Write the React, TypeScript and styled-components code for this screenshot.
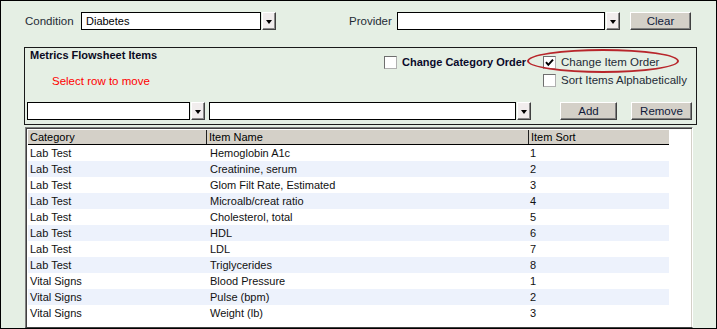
import React from "react";
import styled, { createGlobalStyle } from "styled-components";

const Global = createGlobalStyle`
  html, body { margin: 0; padding: 0; background: #ffffff; }
  body { font-family: "Liberation Sans", Arial, sans-serif; }
  * { box-sizing: border-box; }
`;

const Window = styled.div`
  width: 717px;
  height: 329px;
  border: 1px solid #000;
  background: #e5efe4;
  padding: 11px 19px 0 23px;
  display: flex;
  flex-direction: column;
  overflow: hidden;
  font-family: "Liberation Sans", Arial, sans-serif;
  color: #111;
`;

const FilterBar = styled.div`
  display: flex;
  align-items: center;
  height: 18px;
`;

const FieldLabel = styled.span<{ $w: number; $ml?: number }>`
  width: ${(p) => p.$w}px;
  margin-left: ${(p) => p.$ml ?? 0}px;
  font-size: 11.5px;
  color: #1f2b36;
  white-space: nowrap;
`;

const Combo = styled.div<{ $ml?: number }>`
  display: flex;
  gap: 1px;
  height: 18px;
  margin-left: ${(p) => p.$ml ?? 0}px;
`;

const ComboField = styled.div<{ $w: number }>`
  width: ${(p) => p.$w}px;
  height: 18px;
  border: 1px solid #000;
  background: #fff;
  font-size: 11px;
  line-height: 16px;
  padding-left: 4px;
  color: #000;
  white-space: nowrap;
`;

const ComboArrow = styled.div`
  width: 14px;
  height: 18px;
  background: #f1eded;
  border: 1px solid;
  border-color: #fff #404040 #404040 #fff;
  box-shadow: inset -1px -1px 0 #8a8a8a;
  display: flex;
  align-items: center;
  justify-content: center;
`;

const Triangle = styled.span`
  width: 0;
  height: 0;
  border-left: 3px solid transparent;
  border-right: 3px solid transparent;
  border-top: 4px solid #000;
  margin-top: 1px;
`;

const Button = styled.button<{ $w: number; $ml?: string }>`
  width: ${(p) => p.$w}px;
  height: 18px;
  margin-left: ${(p) => p.$ml ?? "0"};
  padding: 0;
  background: #d4d0c8;
  border: 1px solid;
  border-color: #fff #404040 #404040 #fff;
  box-shadow: inset -1px -1px 0 #808080;
  font-family: "Liberation Sans", Arial, sans-serif;
  font-size: 11.5px;
  line-height: 15px;
  color: #101a3a;
`;

const GroupBox = styled.div`
  margin-top: 17px;
  height: 78px;
  border: 1px solid #1a1a1a;
  padding: 0 4px 4px 1px;
  display: flex;
  flex-direction: column;
`;

const GroupTop = styled.div`
  display: flex;
  justify-content: space-between;
  height: 54px;
`;

const GroupIntro = styled.div`
  display: flex;
  flex-direction: column;
`;

const GroupTitle = styled.div`
  padding-left: 4px;
  font-size: 11px;
  font-weight: bold;
  line-height: 14px;
  color: #0a0a1e;
`;

const Hint = styled.div`
  margin-top: 12px;
  padding-left: 26px;
  font-size: 11.5px;
  line-height: 14px;
  color: #ff0000;
`;

const Options = styled.div`
  margin-top: 5px;
  display: grid;
  grid-template-columns: 159px 149px;
  grid-auto-rows: 18px;
`;

const Option = styled.label<{ $col?: number; $bold?: boolean }>`
  position: relative;
  grid-column: ${(p) => p.$col ?? "auto"};
  display: flex;
  align-items: center;
  gap: 5px;
  font-size: ${(p) => (p.$bold ? "11px" : "11.5px")};
  font-weight: ${(p) => (p.$bold ? "bold" : "normal")};
  color: ${(p) => (p.$bold ? "#0a0a2a" : "#1f2b36")};
  white-space: nowrap;
`;

const Box = styled.span`
  width: 13px;
  height: 13px;
  flex: none;
  background: #fff;
  border: 1px solid;
  border-color: #6e6e6e #b0b0b0 #b0b0b0 #6e6e6e;
  display: flex;
  align-items: center;
  justify-content: center;
`;

const Highlight = styled.span`
  position: absolute;
  left: -16px;
  top: -4px;
  width: 152px;
  height: 24px;
  border: 2px solid #b8262b;
  border-radius: 50%;
  pointer-events: none;
`;

const GroupBottom = styled.div`
  display: flex;
  align-items: center;
  height: 18px;
  padding-left: 1px;
`;

const Grid = styled.div`
  margin: 2px 0 0 1px;
  width: 668px;
  flex: 1;
  background: #fff;
  border: 1px solid;
  border-color: #808080 #fff #404040 #808080;
  box-shadow: inset 1px 1px 0 #404040, inset -1px 0 0 #d4d0c8;
  padding: 2px 0 0 2px;
  overflow: hidden;
`;

const HeaderRow = styled.div`
  display: grid;
  grid-template-columns: 179px 322px 140px;
  height: 15px;
  border-bottom: 1px solid #000;
  width: 641px;
`;

const HeaderCell = styled.div<{ $sep?: boolean }>`
  background: #d4d0c8;
  border-right: ${(p) => (p.$sep ? "1px solid #202020" : "none")};
  padding-left: 2px;
  font-size: 11px;
  line-height: 14px;
  color: #000;
`;

const Row = styled.div<{ $alt: boolean }>`
  display: grid;
  grid-template-columns: 179px 322px 140px;
  width: 641px;
  height: 16px;
  background: ${(p) => (p.$alt ? "#edf2fc" : "#fff")};
`;

const Cell = styled.div<{ $pl?: number }>`
  padding-left: ${(p) => p.$pl ?? 2}px;
  font-size: 11px;
  line-height: 16px;
  color: #111;
  white-space: nowrap;
`;

const Check = () => (
  <svg width="9" height="9" viewBox="0 0 9 9">
    <path d="M1 4.2 L3.3 6.8 L8 1.6" fill="none" stroke="#000" strokeWidth="2" />
  </svg>
);

const rows = [
  ["Lab Test", "Hemoglobin A1c", "1"],
  ["Lab Test", "Creatinine, serum", "2"],
  ["Lab Test", "Glom Filt Rate, Estimated", "3"],
  ["Lab Test", "Microalb/creat ratio", "4"],
  ["Lab Test", "Cholesterol, total", "5"],
  ["Lab Test", "HDL", "6"],
  ["Lab Test", "LDL", "7"],
  ["Lab Test", "Triglycerides", "8"],
  ["Vital Signs", "Blood Pressure", "1"],
  ["Vital Signs", "Pulse (bpm)", "2"],
  ["Vital Signs", "Weight (lb)", "3"],
];

export default function App() {
  return (
    <>
      <Global />
      <Window>
        <FilterBar>
          <FieldLabel $w={56} $ml={1}>Condition</FieldLabel>
          <Combo>
            <ComboField $w={180}>Diabetes</ComboField>
            <ComboArrow><Triangle /></ComboArrow>
          </Combo>
          <FieldLabel $w={48} $ml={73}>Provider</FieldLabel>
          <Combo>
            <ComboField $w={208} />
            <ComboArrow><Triangle /></ComboArrow>
          </Combo>
          <Button $w={61} $ml="10px">Clear</Button>
        </FilterBar>

        <GroupBox>
          <GroupTop>
            <GroupIntro>
              <GroupTitle>Metrics Flowsheet Items</GroupTitle>
              <Hint>Select row to move</Hint>
            </GroupIntro>
            <Options>
              <Option $bold>
                <Box />
                Change Category Order
              </Option>
              <Option>
                <Highlight />
                <Box><Check /></Box>
                Change Item Order
              </Option>
              <Option $col={2}>
                <Box />
                Sort Items Alphabetically
              </Option>
            </Options>
          </GroupTop>
          <GroupBottom>
            <Combo>
              <ComboField $w={163} />
              <ComboArrow><Triangle /></ComboArrow>
            </Combo>
            <Combo $ml={4}>
              <ComboField $w={307} />
              <ComboArrow><Triangle /></ComboArrow>
            </Combo>
            <Button $w={57} $ml="auto">Add</Button>
            <Button $w={61} $ml="14px">Remove</Button>
          </GroupBottom>
        </GroupBox>

        <Grid>
          <HeaderRow>
            <HeaderCell $sep>Category</HeaderCell>
            <HeaderCell $sep>Item Name</HeaderCell>
            <HeaderCell>Item Sort</HeaderCell>
          </HeaderRow>
          {rows.map((r, i) => (
            <Row key={i} $alt={i % 2 === 1}>
              <Cell>{r[0]}</Cell>
              <Cell $pl={3}>{r[1]}</Cell>
              <Cell $pl={1}>{r[2]}</Cell>
            </Row>
          ))}
        </Grid>
      </Window>
    </>
  );
}
